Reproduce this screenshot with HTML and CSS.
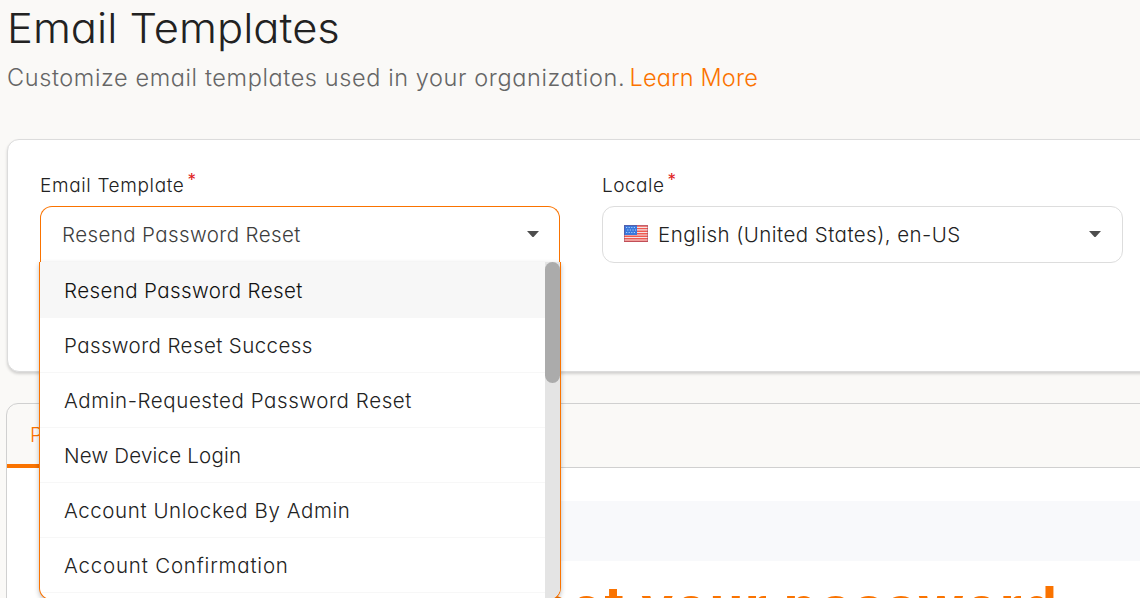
FILE: index.html
```html
<!DOCTYPE html>
<html lang="en">
<head>
<meta charset="utf-8">
<title>Email Templates</title>
<link rel="stylesheet" href="styles.css">
</head>
<body>
<main class="page">
  <header class="page-header">
    <h1 class="title">Email Templates</h1>
    <p class="subtitle"><span class="subtitle-text">Customize email templates used in your organization.</span><a class="link">Learn More</a></p>
  </header>

  <section class="card filters">
    <div class="field">
      <label class="label"><span class="label-template">Email Template</span><span class="required">*</span></label>
      <div class="select select-open">
        <span class="value">Resend Password Reset</span>
        <svg class="caret" width="12" height="6" viewBox="0 0 12 6"><path d="M0 0H12L7 5.4Q6 6.4 5 5.4Z" fill="#4d4d4d"/></svg>
      </div>
      <div class="menu">
        <ul class="options">
          <li class="option option-active">Resend Password Reset</li>
          <li class="option">Password Reset Success</li>
          <li class="option option-wide">Admin-Requested Password Reset</li>
          <li class="option option-tight">New Device Login</li>
          <li class="option option-wide">Account Unlocked By Admin</li>
          <li class="option option-wider">Account Confirmation</li>
        </ul>
        <div class="scrollbar"><div class="thumb"></div></div>
      </div>
    </div>
    <div class="field">
      <label class="label"><span class="label-locale">Locale</span><span class="required">*</span></label>
      <div class="select">
        <svg class="flag" width="24" height="17" viewBox="0 0 24 17">
          <rect width="24" height="17" fill="#f4e3e4"/>
          <path d="M0 1H24M0 3.6H24M0 6.2H24M0 8.8H24M0 11.2H24M0 13.7H24M0 16.2H24" stroke="#ee5a50" stroke-width="1.4"/>
          <rect width="13" height="10" fill="#3a78dc"/>
          <path d="M2 2.5H12M3.2 5H12M2 7.5H12" stroke="#a9cdfb" stroke-width="1.2" stroke-dasharray="1.2 1.4"/>
          <rect x=".5" y=".5" width="23" height="16" fill="none" stroke="#7c3c62" stroke-opacity=".4"/>
        </svg>
        <span class="value value-locale">English (United States), en-US</span>
        <svg class="caret" width="12" height="6" viewBox="0 0 12 6"><path d="M0 0H12L7 5.4Q6 6.4 5 5.4Z" fill="#4d4d4d"/></svg>
      </div>
    </div>
  </section>

  <section class="preview">
    <nav class="tabs"><a class="tab">Preview</a></nav>
    <div class="mail">
      <div class="mail-banner"></div>
      <h2 class="mail-heading">Reset your password</h2>
    </div>
  </section>
</main>
</body>
</html>
```
FILE: styles.css
```css
* { box-sizing: border-box; }
body {
  margin: 0;
  background: #faf9f7;
  color: #222;
  font-family: Inter, "Open Sans", sans-serif;
  font-feature-settings: "cv11" 1;
  font-weight: 300;
}
.page {
  width: 1140px;
  height: 598px;
  overflow: hidden;
  padding-left: 7px;
  display: flex;
  flex-direction: column;
}
.page-header { height: 139px; flex: none; white-space: nowrap; }
.title {
  margin: 0;
  padding-top: 4px;
  font-size: 41px;
  font-weight: 300;
  line-height: 48px;
  transform: scaleX(1.061);
  transform-origin: 0 0;
}
.subtitle { display: flex; margin: 12px 0 0; font-size: 23.5px; line-height: 28px; color: #666; }
.subtitle-text { width: 622.5px; letter-spacing: .6px; }
.link { color: #fa7300; letter-spacing: .15px; }
.card {
  width: 1500px;
  height: 233px;
  flex: none;
  background: #fff;
  border: 1px solid #dcdcdc;
  border-radius: 12px;
  box-shadow: 0 2px 3px rgba(0, 0, 0, .16);
}
.filters { display: flex; gap: 42px; padding: 32px; position: relative; z-index: 1; }
.field { width: 521px; position: relative; }
.field:first-child { width: 520px; }
.label { display: flex; height: 34px; font-size: 19px; line-height: 27px; gap: 3px; color: #222; }
.label-template { letter-spacing: .64px; }
.label-locale { letter-spacing: .5px; }
.required { color: #e02020; font-size: 17px; line-height: 17px; font-weight: 400; }
.select {
  height: 57px;
  display: flex;
  align-items: center;
  padding: 0 21px;
  border: 1px solid #ddd;
  border-radius: 12px;
  background: #fff;
  font-size: 20.5px;
  letter-spacing: .4px;
  white-space: nowrap;
}
.select-open { border-color: #fa7300 #fa7300 #fff; border-radius: 12px 12px 0 0; color: #3d3d3d; padding: 0 20px 0 21px; }
.value-locale { letter-spacing: .45px; }
.caret { margin-left: auto; position: relative; top: -1px; }
.flag { margin-right: 10px; position: relative; top: -1px; }
.menu {
  position: absolute;
  top: 90px;
  left: -1px;
  width: 522px;
  height: 338px;
  display: flex;
  overflow: hidden;
  background: #fff;
  border: 1px solid #fa7300;
  border-top: 0;
  border-radius: 0 0 12px 12px;
  box-shadow: 0 2px 5px rgba(0, 0, 0, .25);
}
.options { flex: 1; margin: 0; padding: 0; list-style: none; }
.option {
  height: 55px;
  display: flex;
  align-items: center;
  padding: 0 0 0 24px;
  border-bottom: 1px solid #f7f7f7;
  font-size: 20.5px;
  letter-spacing: .4px;
  white-space: nowrap;
}
.option:first-child { height: 56px; padding-top: 2px; }
.option-active { background: #f7f7f7; color: #111; }
.option-tight { letter-spacing: .2px; }
.option-wide { letter-spacing: .58px; }
.option-wider { letter-spacing: .8px; }
.scrollbar { width: 15px; background: #e4e4e4; }
.thumb { height: 121px; border-radius: 8px; background: #ababab; }
.preview {
  width: 1500px;
  height: 400px;
  flex: none;
  margin-top: 31px;
  border: 1px solid #d0d0d0;
  border-radius: 12px;
  margin-left: -1px;
  overflow: hidden;
}
.tabs { height: 64px; border-bottom: 1px solid #d0d0d0; display: flex; }
.tab { padding: 19px 23px 0; height: 64px; border-bottom: 4px solid #fa7300; color: #fa7300; font-size: 20px; line-height: 25px; }
.mail { background: #fff; height: 336px; padding: 33px 50px 0; }
.mail-banner { height: 60px; background: #f8f9fb; }
.mail-heading {
  margin: 13px 0 0;
  padding-left: 14px;
  text-align: center;
  font: bold 54px/64px Inter, "Liberation Sans", sans-serif;
  letter-spacing: 1.95px;
  color: #fa7300;
}
```
